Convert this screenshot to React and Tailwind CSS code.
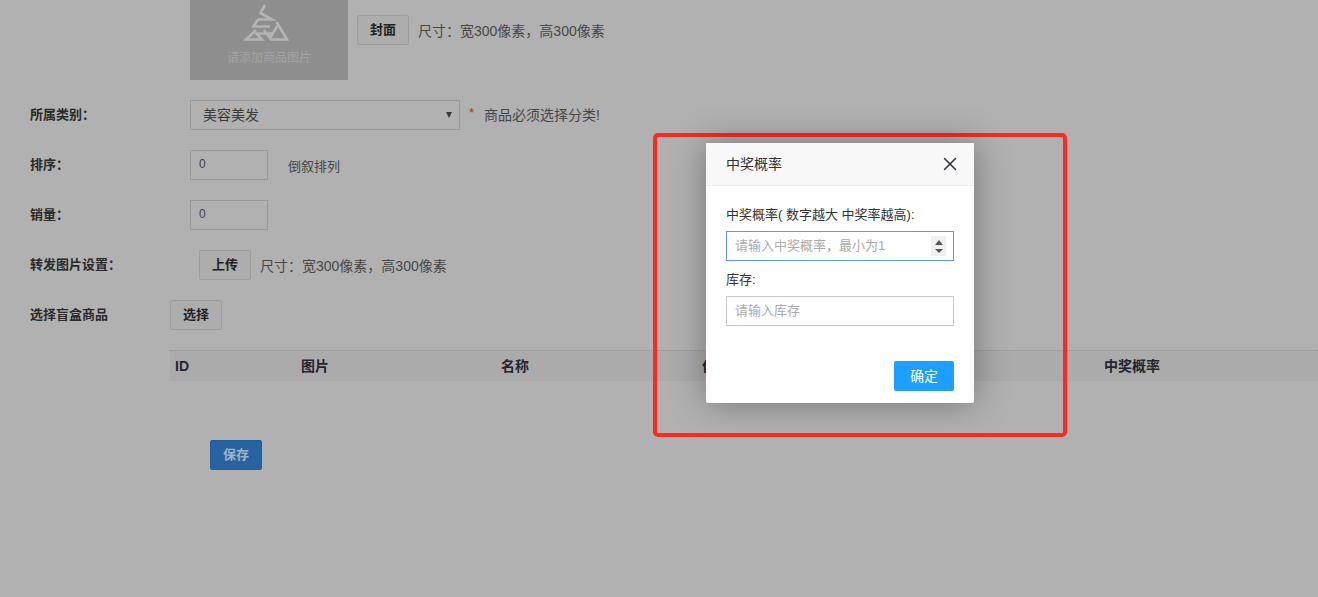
import { X } from 'lucide-react'

const COLUMNS = [
  { name: 'ID', width: 'w-[126px]' },
  { name: '图片', width: 'w-[200px]' },
  { name: '名称', width: 'w-[201px]' },
  { name: '价格', width: 'w-[201px]' },
  { name: '', width: 'w-[201px]' },
  { name: '中奖概率', width: 'flex-1' },
]

function GreyButton({ children, className = '' }) {
  return (
    <button
      type="button"
      className={`h-[30px] w-[52px] rounded-[2px] border border-[#9c9c9c] bg-[#adadad] text-[13px] font-bold text-[#222] ${className}`}
    >
      {children}
    </button>
  )
}

function Label({ children, className = 'w-[190px]' }) {
  return <div className={`shrink-0 pl-[30px] text-[13px] font-bold text-[#2a2a2a] ${className}`}>{children}</div>
}

function NumberBox() {
  return (
    <input
      readOnly
      value="0"
      className="h-[30px] w-[78px] border border-[#989898] bg-transparent px-[8px] pb-[3px] text-[12px] text-[#3f3f4a] outline-none"
    />
  )
}

function Logo() {
  return (
    <svg width="46" height="38" viewBox="0 0 46 38" fill="none" stroke="#b4b4b4" strokeWidth="2.6" className="-ml-[7px]">
      <path d="M22 1 L17.5 9 L29 15.5 L15 15.5 L10.5 22.5 L27 22.5" />
      <path d="M13 26 L3 35.5 L19 35.5 L13.5 29.5 L29 29.5" />
      <path d="M21 26 L27 34 L35 21" />
      <path d="M33.5 18 L44 35.5 L27 35.5" />
    </svg>
  )
}

export default function App() {
  return (
    <div className="relative h-[597px] w-[1318px] overflow-hidden bg-[#b1b1b1] font-['Liberation_Sans','Noto_Sans_CJK_SC',sans-serif]">
      <div className="flex items-start pl-[190px]">
        <div className="flex h-[80px] w-[158px] flex-col items-center bg-[#8e8e8e] pt-[4px]">
          <Logo />
          <div className="mt-[7px] text-[12px] text-[#a4a4a4]">请添加商品图片</div>
        </div>
        <GreyButton className="mt-[15px] ml-[9px]">封面</GreyButton>
        <div className="mt-[21px] ml-[9px] text-[14px] text-[#474747]">尺寸：宽300像素，高300像素</div>
      </div>

      <div className="mt-[20px] flex h-[30px] items-center">
        <Label>所属类别：</Label>
        <div className="relative">
          <select className="block h-[30px] w-[270px] appearance-none border border-[#989898] bg-[#b1b1b1] pl-[12px] text-[14px] text-[#3a3a3a] outline-none">
            <option>美容美发</option>
          </select>
          <span className="absolute top-[12px] right-[8px] h-0 w-0 border-x-[3.5px] border-t-[6px] border-x-transparent border-t-[#3a3a3a]" />
        </div>
        <span className="mb-[4px] ml-[9px] text-[13px] text-[#b03020]">*</span>
        <span className="ml-[10px] text-[14px] text-[#474747]">商品必须选择分类!</span>
      </div>

      <div className="mt-[20px] flex h-[30px] items-center">
        <Label>排序：</Label>
        <NumberBox />
        <span className="mt-[4px] ml-[20px] text-[13px] text-[#474747]">倒叙排列</span>
      </div>

      <div className="mt-[20px] flex h-[30px] items-center">
        <Label>销量：</Label>
        <NumberBox />
      </div>

      <div className="mt-[20px] flex h-[30px] items-center">
        <Label>转发图片设置：</Label>
        <GreyButton className="ml-[9px]">上传</GreyButton>
        <span className="mt-[2px] ml-[9px] text-[14px] text-[#474747]">尺寸：宽300像素，高300像素</span>
      </div>

      <div className="mt-[20px] flex h-[30px] items-center">
        <Label className="w-[170px]">选择盲盒商品</Label>
        <GreyButton>选择</GreyButton>
      </div>

      <div className="mt-[20px] ml-[170px] flex h-[31px] items-center border-t border-dotted border-[#949494] bg-[#ababab]">
        {COLUMNS.map((col) => (
          <div key={col.width + col.name} className={`pl-[5px] text-[14px] font-bold text-[#24242c] ${col.width}`}>
            {col.name}
          </div>
        ))}
      </div>

      <button
        type="button"
        className="mt-[59px] ml-[210px] block h-[30px] w-[52px] rounded-[2px] border border-[#275d96] bg-[#2663a0] text-[13px] font-bold text-[#9fb4c8]"
      >
        保存
      </button>

      {/* annotation drawn on top of the screenshot */}
      <div className="absolute top-[133px] left-[653px] h-[304px] w-[414px] rounded-[5px] border-4 border-[#fb2a1c]" />

      {/* modal */}
      <div className="absolute top-[143px] left-[706px] flex h-[260px] w-[268px] flex-col rounded-[2px] bg-white shadow-[0_0_35px_rgba(0,0,0,0.35)]">
        <div className="flex h-[43px] shrink-0 items-center justify-between border-b border-[#eee] bg-[#f8f8f8] pr-[13px] pl-[20px] text-[14px] text-[#333]">
          <span>中奖概率</span>
          <X size={22} strokeWidth={1.6} className="text-[#2f2f3a]" />
        </div>
        <div className="flex flex-1 flex-col px-[20px] pt-[20px] text-[13px] text-[#333]">
          <div className="h-[25px] leading-[18px]">中奖概率( 数字越大 中奖率越高):</div>
          <div className="relative">
            <input
              readOnly
              placeholder="请输入中奖概率，最小为1"
              className="h-[30px] w-full border border-[#5b93f2] px-[8px] pb-[2px] text-[13px] outline-none placeholder:text-[#aaa]"
            />
            <div className="absolute top-[5px] right-[8px] flex h-[20px] w-[15px] flex-col items-center justify-center gap-[4px] bg-[#f0f0f0]">
              <span className="h-0 w-0 border-x-[4px] border-b-[5px] border-x-transparent border-b-[#555]" />
              <span className="h-0 w-0 border-x-[4px] border-t-[4px] border-x-transparent border-t-[#555]" />
            </div>
          </div>
          <div className="mt-[10px] h-[25px] leading-[18px]">库存:</div>
          <input
            readOnly
            placeholder="请输入库存"
            className="h-[30px] w-full border border-[#ccc] px-[8px] pb-[2px] text-[13px] outline-none placeholder:text-[#aaa]"
          />
          <button
            type="button"
            className="mt-[35px] h-[30px] w-[60px] self-end rounded-[2px] bg-[#1e9fff] text-[14px] text-white"
          >
            确定
          </button>
        </div>
      </div>
    </div>
  )
}
